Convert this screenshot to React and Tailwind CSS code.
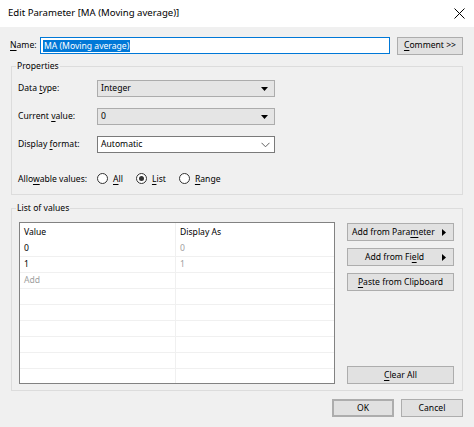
import React from "react";

function U({ children }) {
    return <span className="underline underline-offset-[1.5px]">{children}</span>;
}

function DropArrow() {
    return (
        <svg width="7" height="4" viewBox="0 0 7 4">
            <path d="M0 0 L7 0 L3.5 4 Z" fill="#000" />
        </svg>
    );
}

function Chevron() {
    return (
        <svg width="9" height="6" viewBox="0 0 9 6">
            <path d="M0.5 0.8 L4.5 4.8 L8.5 0.8" fill="none" stroke="#606060" strokeWidth="1" />
        </svg>
    );
}

function RightArrow() {
    return (
        <svg width="4" height="7" viewBox="0 0 4 7">
            <path d="M0 0 L4 3.5 L0 7 Z" fill="#000" />
        </svg>
    );
}

function Radio({ checked, children }) {
    return (
        <div className="flex items-center gap-[5px]">
            <span className="w-[11px] h-[11px] rounded-full border border-[#333] bg-white flex items-center justify-center">
                {checked && <span className="w-[5px] h-[5px] rounded-full bg-[#333]"></span>}
            </span>
            <span>{children}</span>
        </div>
    );
}

function WinButton({ children, className = "" }) {
    return (
        <div className={`h-[18px] bg-[#e1e1e1] border border-[#adadad] flex items-center whitespace-nowrap ${className}`}>
            {children}
        </div>
    );
}

export default function App() {
    const rows = [
        { v: "0", d: "0" },
        { v: "1", d: "1" },
        { v: "Add", d: "", add: true },
        { v: "", d: "" },
        { v: "", d: "" },
        { v: "", d: "" },
        { v: "", d: "" },
        { v: "", d: "" },
    ];

    return (
        <div className="w-[474px] h-[427px] bg-[#f0f0f0] text-[8.6px] text-black font-['Noto_Sans',sans-serif] overflow-hidden whitespace-nowrap">
            {/* title bar */}
            <div className="h-[27px] bg-white flex items-center justify-between pl-[8px] pr-[9px]">
                <span className="text-[9.6px]">Edit Parameter [MA (Moving average)]</span>
                <svg width="11" height="11" viewBox="0 0 11 11">
                    <path d="M0.5 0.5 L10.5 10.5 M10.5 0.5 L0.5 10.5" stroke="#000" strokeWidth="1" />
                </svg>
            </div>

            <div className="px-[11px]">
                {/* name row */}
                <div className="mt-[10px] flex items-center h-[17px]">
                    <span className="w-[30px] -ml-[1px]"><U>N</U>ame:</span>
                    <div className="w-[350px] h-[17px] bg-white border border-[#0078d7] flex items-center pl-[2px]">
                        <span className="bg-[#0078d7] text-white leading-[12px] px-[1px]">MA (Moving average)</span>
                    </div>
                    <WinButton className="ml-[7px] w-[66px] justify-center">
                        <span><U>C</U>omment &gt;&gt;</span>
                    </WinButton>
                </div>

                {/* properties */}
                <fieldset className="mt-[5px] border border-[#dcdcdc] pl-[6px] pr-[8px] pt-[7px] pb-[7px]">
                    <legend className="-ml-[2px] px-[1px] leading-[14px]">Properties</legend>
                    <div className="flex flex-col gap-[11px]">
                        <div className="flex items-center h-[17px]">
                            <span className="w-[79px]">Data <U>t</U>ype:</span>
                            <div className="w-[178px] h-[17px] bg-[#e5e5e5] border border-[#acacac] flex items-center justify-between pl-[3px] pr-[6px]">
                                <span>Integer</span>
                                <DropArrow />
                            </div>
                        </div>
                        <div className="flex items-center h-[17px]">
                            <span className="w-[79px]">Current <U>v</U>alue:</span>
                            <div className="w-[178px] h-[17px] bg-[#e5e5e5] border border-[#acacac] flex items-center justify-between pl-[3px] pr-[6px]">
                                <span>0</span>
                                <DropArrow />
                            </div>
                        </div>
                        <div className="flex items-center h-[17px]">
                            <span className="w-[79px]">Display <U>f</U>ormat:</span>
                            <div className="w-[178px] h-[17px] bg-white border border-[#7a7a7a] flex items-center justify-between pl-[3px] pr-[4px]">
                                <span>Automatic</span>
                                <Chevron />
                            </div>
                        </div>
                        <div className="flex items-center h-[16px] mt-[7px]">
                            <span className="w-[79px]">Allo<U>w</U>able values:</span>
                            <div className="flex items-center gap-[13px]">
                                <Radio><U>A</U>ll</Radio>
                                <Radio checked><U>L</U>ist</Radio>
                                <Radio><U>R</U>ange</Radio>
                            </div>
                        </div>
                    </div>
                </fieldset>

                {/* list of values */}
                <fieldset className="mt-[6px] border border-[#dcdcdc] pl-[7px] pr-[8px] pt-[7px] pb-[6px]">
                    <legend className="-ml-[3px] px-[1px] leading-[14px]">List of values</legend>
                    <div className="flex gap-[12px]">
                        <div className="w-[316px] h-[162px] bg-white border border-[#828282] flex flex-col">
                            <div className="flex h-[18px] shrink-0">
                                <div className="w-[156px] pl-[4px] flex items-center border-r border-[#f0f0f0]">Value</div>
                                <div className="flex-1 pl-[4px] flex items-center">Display As</div>
                            </div>
                            {rows.map((r, i) => (
                                <div key={i} className="flex h-[16px] shrink-0 border-b border-[#f0f0f0]">
                                    <div className={`w-[156px] pl-[4px] flex items-center border-r border-[#f0f0f0] ${r.add ? "text-[#a0a0a0]" : ""}`}>{r.v}</div>
                                    <div className="flex-1 pl-[4px] flex items-center text-[#a0a0a0]">{r.d}</div>
                                </div>
                            ))}
                            <div className="flex flex-1">
                                <div className="w-[156px] border-r border-[#f0f0f0]"></div>
                            </div>
                        </div>
                        <div className="w-[107px] flex flex-col justify-between pt-[1px]">
                            <div className="flex flex-col gap-[7px]">
                                <WinButton className="justify-between pl-[4px] pr-[7px]">
                                    <span>Add from Para<U>m</U>eter</span>
                                    <RightArrow />
                                </WinButton>
                                <WinButton className="justify-between pl-[17px] pr-[7px]">
                                    <span>Add from Fi<U>e</U>ld</span>
                                    <RightArrow />
                                </WinButton>
                                <WinButton className="justify-center">
                                    <span><U>P</U>aste from Clipboard</span>
                                </WinButton>
                            </div>
                            <WinButton className="justify-center">
                                <span><U>C</U>lear All</span>
                            </WinButton>
                        </div>
                    </div>
                </fieldset>

                {/* dialog buttons */}
                <div className="mt-[8px] flex justify-end gap-[7px]">
                    <WinButton className="w-[62px] justify-center border-[#0078d7] border-2">
                        <span>OK</span>
                    </WinButton>
                    <WinButton className="w-[62px] justify-center">
                        <span>Cancel</span>
                    </WinButton>
                </div>
            </div>
        </div>
    );
}
